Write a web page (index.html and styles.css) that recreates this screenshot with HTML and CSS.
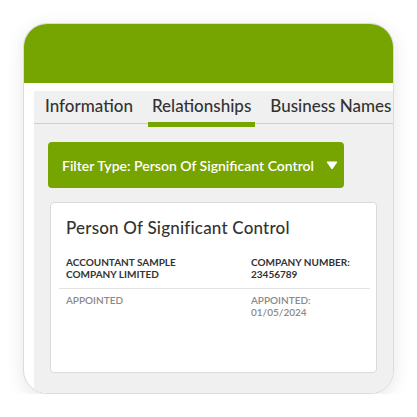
FILE: index.html
```html
<!DOCTYPE html>
<html lang="en">
<head>
    <meta charset="UTF-8">
    <meta name="viewport" content="width=device-width, initial-scale=1.0">
    <title>Company Relationships</title>
    <link rel="stylesheet" href="styles.css">
</head>
<body>
    <div class="frame">
        <div class="header"></div>
        <div class="content">
            <div class="tabs">
                <div class="tab">Information</div>
                <div class="tab active">Relationships</div>
                <div class="tab">Business Names</div>
            </div>
            <div class="panel">
                <button class="filter">
                    <span>Filter Type: Person Of Significant Control</span>
                    <svg class="caret" width="12" height="10" viewBox="0 0 12 10">
                        <path d="M1.5 1.5 H10.5 Q11.6 1.5 11 2.6 L6.9 8.6 Q6 9.8 5.1 8.6 L1 2.6 Q0.4 1.5 1.5 1.5 Z" fill="#fff"/>
                    </svg>
                </button>
                <div class="card">
                    <h2 class="card-title">Person Of Significant Control</h2>
                    <div class="row">
                        <div class="cell">Accountant Sample<br>Company Limited</div>
                        <div class="cell">Company Number:<br>23456789</div>
                    </div>
                    <div class="row muted">
                        <div class="cell">Appointed</div>
                        <div class="cell">Appointed:<br>01/05/2024</div>
                    </div>
                </div>
            </div>
        </div>
    </div>
</body>
</html>
```

FILE: styles.css
```css
body {
    margin: 0;
    background-color: #fff;
    font-family: Lato, "Noto Sans", sans-serif;
    color: #333;
}
.frame {
    box-sizing: border-box;
    width: 371px;
    height: 371px;
    margin: 23px 0 0 23px;
    border: 1px solid #dcdcdc;
    border-radius: 24px;
    background-color: #fff;
    box-shadow: 0 4px 18px rgba(0, 0, 0, 0.1);
    overflow: hidden;
    display: flex;
    flex-direction: column;
}
.header {
    height: 59px;
    background-color: #76a501;
    flex-shrink: 0;
}
.content {
    flex: 1;
    margin: 8px 0 0 10px;
    background-color: #f0f0f0;
    display: flex;
    flex-direction: column;
}
.tabs {
    display: flex;
    gap: 11px;
    height: 32px;
    padding-left: 7px;
    border-bottom: 1px solid #cfcfcf;
    white-space: nowrap;
}
.tab {
    padding: 0 4px;
    font-size: 17px;
    font-weight: 500;
    line-height: 30px;
    border-bottom: 5px solid transparent;
    margin-bottom: -4px;
}
.tab.active {
    border-bottom-color: #76a501;
}
.panel {
    padding: 18px 0 0 14px;
}
.filter {
    display: flex;
    align-items: center;
    gap: 12px;
    width: 296px;
    height: 46px;
    padding: 0 0 0 14px;
    border: none;
    border-radius: 4px;
    background-color: #76a501;
    color: #fff;
    font-family: inherit;
    font-size: 14px;
    font-weight: 600;
    cursor: pointer;
}
.caret {
    display: block;
}
.card {
    box-sizing: border-box;
    width: 327px;
    height: 171px;
    margin: 14px 0 0 2px;
    padding: 15px 6px 0 8px;
    background-color: #fff;
    border: 1px solid #dadada;
    border-radius: 4px;
}
.card-title {
    margin: 0 0 18px 7px;
    font-size: 17px;
    font-weight: 500;
    letter-spacing: 0.2px;
    line-height: 20px;
}
.row {
    display: grid;
    grid-template-columns: 185px 1fr;
    padding: 0 0 8px 7px;
    font-size: 10px;
    font-weight: 700;
    line-height: 12px;
    text-transform: uppercase;
}
.row + .row {
    padding-top: 5px;
    border-top: 1px solid #e2e2e2;
}
.row.muted {
    color: #8a8a8a;
    font-weight: 600;
}
```
